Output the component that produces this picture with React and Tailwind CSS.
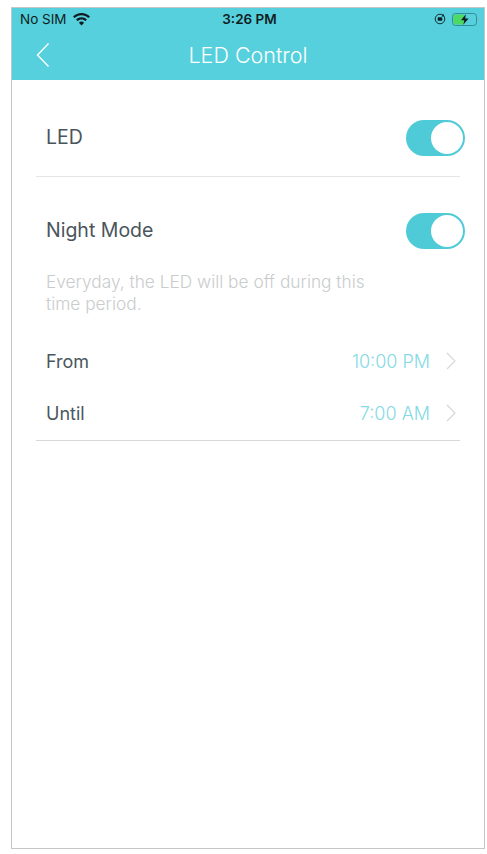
const Toggle = () => (
    <div className="w-[59px] h-[36px] rounded-full bg-[#4fcbd8] p-[2px] flex justify-end">
        <div className="w-[32px] h-[32px] rounded-full bg-white" />
    </div>
)

const Chevron = () => (
    <svg className="w-[10px] h-[18px]" viewBox="0 0 10 18" fill="none" stroke="#d3d6d7" strokeWidth="1.1">
        <path d="M1 1l8 8-8 8" />
    </svg>
)

function WifiIcon() {
    return (
        <svg className="w-[17px] h-[13px]" viewBox="0 0 17 13" fill="#111d22">
            <path d="M8.5 0C5.2 0 2.3 1.3 0 3.4l1.6 1.7C3.4 3.4 5.8 2.3 8.5 2.3s5.1 1.1 6.9 2.8L17 3.4C14.7 1.3 11.8 0 8.5 0z" />
            <path d="M8.5 4.3c-2.1 0-4 .8-5.4 2.2l1.6 1.7c1-1 2.3-1.6 3.8-1.6s2.8.6 3.8 1.6l1.6-1.7c-1.4-1.4-3.3-2.2-5.4-2.2z" />
            <path d="M8.5 8.6c-1 0-1.9.4-2.6 1.1L8.5 12.6l2.6-2.9c-.7-.7-1.6-1.1-2.6-1.1z" />
        </svg>
    )
}

function RotationLockIcon() {
    return (
        <svg className="w-[12px] h-[12px]" viewBox="0 0 13 13" fill="none">
            <circle cx="6.5" cy="6.5" r="5.2" stroke="#111d22" strokeWidth="1" />
            <path d="M10 .8l1.2 2.8-3 .1z" fill="#111d22" />
            <rect x="4" y="4.5" width="5" height="4" rx="1" fill="#111d22" />
        </svg>
    )
}

function BatteryIcon() {
    return (
        <svg className="w-[27px] h-[13px]" viewBox="0 0 27 13" fill="none">
            <rect x="0.5" y="0.5" width="24" height="12" rx="3" stroke="#2c7c88" strokeWidth="0.8" />
            <rect x="1.5" y="1.5" width="11" height="10" rx="2" fill="#4cd964" />
            <path d="M13.8 1.2L9 7.2h3.3l-1 4.6 5.3-6.2h-3.4z" fill="#111d22" />
            <path d="M25.6 4.5v4c.7-.3 1.1-1 1.1-2s-.4-1.7-1.1-2z" fill="#7fb8c0" />
        </svg>
    )
}

export default function App() {
    return (
        <div className="w-[487px] h-[854px] bg-white pt-[7px] pl-[11px] pr-[2px] pb-[5px]" style={{ fontFamily: 'Inter, sans-serif' }}>
            <div className="h-full border border-[#c4c6c7] flex flex-col">
                {/* Header */}
                <header className="h-[72px] bg-[#55d0dc] shrink-0">
                    <div className="h-[22px] pl-[8px] pr-[8px] flex items-center justify-between text-[#111d22]">
                        <div className="flex items-center gap-[6px] w-[120px]">
                            <span className="text-[13.5px]">No SIM</span>
                            <WifiIcon />
                        </div>
                        <span className="font-semibold text-[13.5px]">3:26 PM</span>
                        <div className="flex items-center justify-end gap-[6px] w-[120px] -mr-[3px]">
                            <RotationLockIcon />
                            <BatteryIcon />
                        </div>
                    </div>
                    <div className="relative h-[50px] flex items-center justify-center">
                        <svg className="absolute left-[24px] top-[12px] w-[14px] h-[26px]" viewBox="0 0 14 26" fill="none" stroke="white" strokeWidth="1.4">
                            <path d="M12.5 1.5L1.5 13l11 11.5" />
                        </svg>
                        <span className="text-white text-[21.5px] font-light">LED Control</span>
                    </div>
                </header>

                {/* LED */}
                <div className="mx-[24px] mt-[19px] pl-[10px] h-[78px] border-b border-[#e3e5e6] flex items-center justify-between">
                    <span className="text-[19.5px] text-[#4a555b]">LED</span>
                    <div className="-mr-[5px]"><Toggle /></div>
                </div>

                {/* Night mode */}
                <div className="mx-[24px] border-b border-[#d6d8d9] pb-[1px]">
                    <div className="pl-[10px] flex items-center justify-between mt-[36px] h-[36px]">
                        <span className="text-[19.5px] text-[#4a555b]">Night Mode</span>
                        <div className="-mr-[5px]"><Toggle /></div>
                    </div>
                    <p className="ml-[10px] mt-[22px] w-[330px] text-[17.3px] leading-[22px] text-[#c9cccd] font-light">
                        Everyday, the LED will be off during this time period.
                    </p>
                    <div className="ml-[10px] mt-[20px] h-[52px] flex items-center justify-between text-[18px]">
                        <span className="text-[#4a575d]">From</span>
                        <div className="flex items-center gap-[16px] mr-[4px]">
                            <span className="text-[#84dae4] font-light">10:00 PM</span>
                            <Chevron />
                        </div>
                    </div>
                    <div className="ml-[10px] h-[52px] flex items-center justify-between text-[18px]">
                        <span className="text-[#4a575d]">Until</span>
                        <div className="flex items-center gap-[16px] mr-[4px]">
                            <span className="text-[#84dae4] font-light">7:00 AM</span>
                            <Chevron />
                        </div>
                    </div>
                </div>
            </div>
        </div>
    )
}
